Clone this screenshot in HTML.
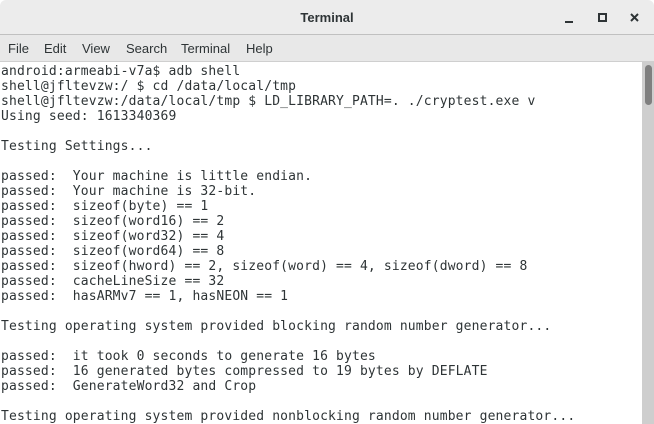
<!DOCTYPE html>
<html><head><style>
html,body{margin:0;padding:0;width:654px;height:424px;overflow:hidden;background:#fff}
.title{position:absolute;left:0;top:0;width:654px;height:35px;background:#ececec;border-bottom:1px solid #c0c0c0;border-radius:6px 6px 0 0;box-sizing:border-box}
.title .t{position:absolute;left:0;right:0;top:10px;text-align:center;font:bold 13px "Liberation Sans",sans-serif;color:#2e3436;}
.menu{position:absolute;left:0;top:35px;width:654px;height:27px;background:#e8e8e8;border-bottom:1px solid #cfcfcf;box-sizing:border-box;font:13px "Liberation Sans",sans-serif;color:#2e3436}
.menu span{position:absolute;top:6px}
.term{position:absolute;left:1px;top:64px;font:13px/15px "DejaVu Sans Mono",monospace;letter-spacing:0.15px;color:#2e3436;white-space:pre;margin:0}
.track{position:absolute;left:642px;top:62px;width:12px;height:362px;background:#cecece}
.thumb{position:absolute;left:645px;top:65px;width:7px;height:40px;background:#7f7f7f;border-radius:4px}
</style></head><body>
<div class="title"><div class="t">Terminal</div>
<div style="position:absolute;left:565px;top:21px;width:8px;height:2px;background:#2e3436"></div>
<div style="position:absolute;left:598px;top:13px;width:5px;height:5px;border:2px solid #2e3436"></div>
<svg style="position:absolute;left:630px;top:13px" width="9" height="9" viewBox="0 0 9 9"><path d="M1 1L8 8M8 1L1 8" stroke="#2e3436" stroke-width="2"/></svg>
</div>
<div class="menu"><span style="left:8px">File</span><span style="left:44px">Edit</span><span style="left:82px">View</span><span style="left:126px">Search</span><span style="left:181px">Terminal</span><span style="left:246px">Help</span></div>
<pre class="term">android:armeabi-v7a$ adb shell
shell@jfltevzw:/ $ cd /data/local/tmp
shell@jfltevzw:/data/local/tmp $ LD_LIBRARY_PATH=. ./cryptest.exe v
Using seed: 1613340369

Testing Settings...

passed:  Your machine is little endian.
passed:  Your machine is 32-bit.
passed:  sizeof(byte) == 1
passed:  sizeof(word16) == 2
passed:  sizeof(word32) == 4
passed:  sizeof(word64) == 8
passed:  sizeof(hword) == 2, sizeof(word) == 4, sizeof(dword) == 8
passed:  cacheLineSize == 32
passed:  hasARMv7 == 1, hasNEON == 1

Testing operating system provided blocking random number generator...

passed:  it took 0 seconds to generate 16 bytes
passed:  16 generated bytes compressed to 19 bytes by DEFLATE
passed:  GenerateWord32 and Crop

Testing operating system provided nonblocking random number generator...</pre>
<div class="track"></div><div class="thumb"></div>
</body></html>
